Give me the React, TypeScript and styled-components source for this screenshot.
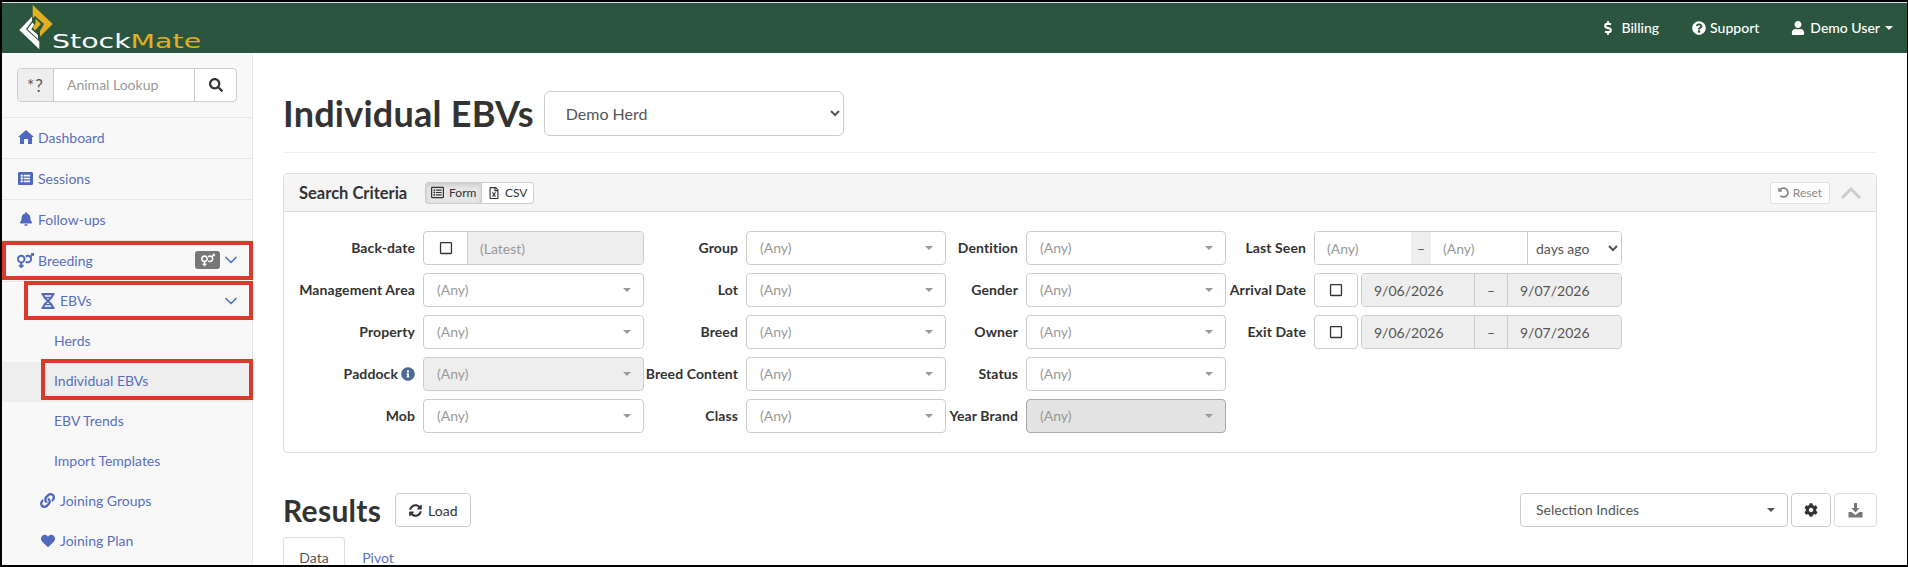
import styled, { createGlobalStyle } from "styled-components";
import {
  FaBell,
  FaCog,
  FaDollarSign,
  FaHeart,
  FaInfoCircle,
  FaLink,
  FaListAlt,
  FaQuestionCircle,
  FaRegFileExcel,
  FaRegListAlt,
  FaRegSquare,
  FaSearch,
  FaSyncAlt,
  FaUndoAlt,
  FaUser,
  FaVenusMars,
} from "react-icons/fa";
import { FiChevronDown } from "react-icons/fi";

const GlobalStyle = createGlobalStyle`
  html, body {
    margin: 0;
    height: 100%;
    overflow: hidden;
    background: #000;
  }
  body, select, input, button {
    font-family: Lato, "Liberation Sans", sans-serif;
    font-size: 14px;
  }
  * {
    box-sizing: border-box;
  }
`;

const Frame = styled.div`
  height: 567px;
  padding: 2px 1px 2px 2px;
  background: #000;
`;
const Page = styled.div`
  height: 563px;
  overflow: hidden;
  background: #fff;
  border-top: 1px solid #ddd;
  display: flex;
  flex-direction: column;
`;

const TopBar = styled.header`
  flex: 0 0 50px;
  background: #2c5540;
  color: #fff;
  display: flex;
  align-items: center;
  justify-content: space-between;
  padding: 0 14px 0 17px;
`;
const Logo = styled.div`
  display: flex;
  align-items: flex-end;
  height: 50px;
`;
const LogoText = styled.span`
  font-family: "DejaVu Sans", sans-serif;
  font-size: 20px;
  line-height: 20px;
  margin: 0 0 2px -3px;
  transform: scaleX(1.42);
  transform-origin: left bottom;
  color: #fff;
  b {
    font-weight: 400;
    color: #e0b022;
  }
`;
const TopNav = styled.nav`
  display: flex;
  align-items: center;
  font-weight: 500;
  margin-top: -1px;
`;
const TopItem = styled.span<{ $gap: number; $space: number }>`
  display: inline-flex;
  align-items: center;
  gap: ${({ $gap }) => $gap}px;
  margin-left: ${({ $space }) => $space}px;
`;
const Caret = styled.i<{ $color?: string }>`
  display: inline-block;
  width: 0;
  height: 0;
  border-left: 4px solid transparent;
  border-right: 4px solid transparent;
  border-top: 4px solid ${({ $color }) => $color ?? "currentColor"};
`;

const Body = styled.div`
  flex: 1;
  display: flex;
  min-height: 0;
`;
const Sidebar = styled.aside`
  flex: 0 0 251px;
  background: #f8f8f8;
  border-right: 1px solid #e7e7e7;
`;
const SearchWrap = styled.div`
  height: 65px;
  padding: 15px 15px 0 15px;
  border-bottom: 1px solid #e7e7e7;
`;
const SearchGroup = styled.div`
  display: flex;
  width: 220px;
  height: 34px;
  border: 1px solid #ccc;
  border-radius: 4px;
  background: #fff;
  overflow: hidden;
`;
const SearchAddon = styled.span`
  width: 36px;
  background: #eee;
  border-right: 1px solid #ccc;
  color: #555;
  display: flex;
  align-items: center;
  justify-content: center;
  font-size: 17px;
  letter-spacing: 1px;
`;
const SearchInput = styled.span`
  width: 140px;
  padding: 0 0 1px 13px;
  color: #999;
  display: flex;
  align-items: center;
`;
const SearchButton = styled.span`
  flex: 1;
  border-left: 1px solid #ccc;
  color: #333;
  display: flex;
  align-items: center;
  justify-content: center;
`;

const NavRow = styled.div<{ $indent: number; $divider?: boolean; $active?: boolean }>`
  position: relative;
  height: ${({ $divider }) => ($divider ? 41 : 40)}px;
  display: flex;
  align-items: center;
  gap: 4px;
  padding: 0 11px ${({ $divider }) => ($divider ? 2 : 3)}px ${({ $indent }) => $indent}px;
  color: #5a6fbd;
  background: ${({ $active }) => ($active ? "#eee" : "transparent")};
  border-bottom: ${({ $divider }) => ($divider ? "1px solid #e7e7e7" : "none")};
`;
const NavIcon = styled.span`
  width: 17px;
  display: inline-flex;
  justify-content: center;
  color: #5069bd;
`;
const Push = styled.span`
  margin-left: auto;
  display: inline-flex;
  align-items: center;
  gap: 1px;
`;
const Badge = styled.span`
  width: 25px;
  height: 18px;
  border-radius: 3px;
  background: #777;
  color: #fff;
  display: inline-flex;
  align-items: center;
  justify-content: center;
`;
const Annotation = styled.span<{ $top: number; $left: number; $bottom: number }>`
  position: absolute;
  top: ${({ $top }) => $top}px;
  left: ${({ $left }) => $left}px;
  right: -1px;
  bottom: ${({ $bottom }) => $bottom}px;
  border: 4px solid #d93a2b;
  z-index: 2;
  pointer-events: none;
`;

const Main = styled.main`
  flex: 1;
  padding: 0 30px;
  color: #333;
  min-width: 0;
`;
const TitleRow = styled.div`
  display: flex;
  align-items: center;
  gap: 10px;
  padding: 38px 0 16px;
  border-bottom: 1px solid #eee;
  margin-bottom: 20px;
`;
const Title = styled.h1`
  margin: 0;
  font-size: 36px;
  line-height: 45px;
  letter-spacing: 0.24px;
  font-weight: 700;
  color: #333;
`;
const HerdSelect = styled.select`
  width: 300px;
  height: 45px;
  padding: 0 17px;
  font-size: 16px;
  color: #555;
  background: #fff;
  border: 1px solid #ccc;
  border-radius: 6px;
`;

const Card = styled.section`
  border: 1px solid #ddd;
  border-radius: 4px;
`;
const CardHeader = styled.div`
  height: 38px;
  background: #f5f5f5;
  border-bottom: 1px solid #ddd;
  display: flex;
  align-items: center;
  padding: 0 15px 0 15px;
`;
const CardTitle = styled.span`
  font-size: 16.5px;
  font-weight: 700;
  color: #333;
`;
const ToggleGroup = styled.div`
  display: flex;
  margin-left: 18px;
`;
const ToggleButton = styled.span<{ $on?: boolean }>`
  width: ${({ $on }) => ($on ? 57 : 53)}px;
  height: 22px;
  display: inline-flex;
  align-items: center;
  justify-content: center;
  gap: 5px;
  font-size: 12px;
  color: #333;
  border: 1px solid #ccc;
  background: ${({ $on }) => ($on ? "#e6e6e6" : "#fff")};
  box-shadow: ${({ $on }) => ($on ? "inset 0 2px 4px rgba(0,0,0,.125)" : "none")};
  border-radius: ${({ $on }) => ($on ? "3px 0 0 3px" : "0 3px 3px 0")};
  margin-left: ${({ $on }) => ($on ? 0 : -1)}px;
`;
const ResetButton = styled.span`
  margin-left: auto;
  width: 60px;
  height: 22px;
  display: inline-flex;
  align-items: center;
  justify-content: center;
  gap: 4px;
  font-size: 12px;
  color: #777;
  background: #fff;
  border: 1px solid #ddd;
  border-radius: 3px;
  opacity: 0.85;
`;
const Collapse = styled.span`
  margin-left: 11px;
  display: inline-flex;
`;

const FormGrid = styled.div`
  display: flex;
  padding: 19px 0 19px 15px;
`;
const FormColumn = styled.div<{ $label: number; $control: number }>`
  display: grid;
  grid-template-columns: ${({ $label, $control }) => `${$label}px ${$control}px`};
  grid-auto-rows: 34px;
  row-gap: 8px;
  align-content: start;
`;
const Label = styled.label`
  align-self: center;
  justify-self: end;
  padding: 0 8px 1px 0;
  font-weight: 700;
  letter-spacing: 0.1px;
  white-space: nowrap;
  display: inline-flex;
  align-items: center;
  gap: 3px;
  color: #333;
`;
const SelectBox = styled.div<{ $tone?: "plain" | "muted" | "dark" }>`
  height: 34px;
  display: flex;
  align-items: center;
  justify-content: space-between;
  padding: 0 12px 1px 13px;
  color: #999;
  border-radius: 4px;
  border: 1px solid ${({ $tone }) => ($tone === "dark" ? "#aaa" : "#ccc")};
  background: ${({ $tone }) =>
    $tone === "dark" ? "#e3e3e3" : $tone === "muted" ? "#eee" : "#fff"};
`;
const InputGroup = styled.div<{ $grow?: boolean }>`
  height: 34px;
  flex: ${({ $grow }) => ($grow ? 1 : "none")};
  display: flex;
  border: 1px solid #ccc;
  border-radius: 4px;
  overflow: hidden;
  background: #fff;
`;
const CheckCell = styled.span<{ $width: number }>`
  flex: 0 0 ${({ $width }) => $width}px;
  display: flex;
  align-items: center;
  justify-content: center;
  color: #333;
`;
const TextCell = styled.span<{ $width?: number; $grey?: boolean; $dim?: boolean; $edge?: boolean }>`
  flex: ${({ $width }) => ($width ? `0 0 ${$width}px` : "1")};
  display: flex;
  align-items: center;
  padding: 0 12px;
  color: ${({ $dim }) => ($dim ? "#999" : "#555")};
  background: ${({ $grey }) => ($grey ? "#eee" : "#fff")};
  border-left: ${({ $edge }) => ($edge ? "1px solid #ccc" : "none")};
`;
const DashCell = styled.span<{ $width: number; $edge?: boolean }>`
  flex: 0 0 ${({ $width }) => $width}px;
  display: flex;
  align-items: center;
  justify-content: center;
  background: #eee;
  color: #555;
  border-left: ${({ $edge }) => ($edge ? "1px solid #ccc" : "none")};
  border-right: ${({ $edge }) => ($edge ? "1px solid #ccc" : "none")};
`;
const UnitSelect = styled.select`
  flex: 1;
  min-width: 0;
  border: none;
  border-left: 1px solid #ccc;
  background: #fff;
  color: #555;
  padding-left: 4px;
`;
const DateRow = styled.div`
  display: flex;
  gap: 3px;
`;

const ResultsRow = styled.div`
  display: flex;
  align-items: flex-start;
  gap: 14px;
  margin-top: 40px;
`;
const ResultsTitle = styled.h2`
  margin: 0;
  font-size: 30px;
  line-height: 34px;
  letter-spacing: 0.3px;
  font-weight: 700;
  color: #333;
`;
const Button = styled.span<{ $width: number; $faded?: boolean }>`
  width: ${({ $width }) => $width}px;
  height: 34px;
  display: inline-flex;
  align-items: center;
  justify-content: center;
  gap: 6px;
  background: #fff;
  color: ${({ $faded }) => ($faded ? "#777" : "#333")};
  border: 1px solid ${({ $faded }) => ($faded ? "#ddd" : "#ccc")};
  border-radius: 4px;
`;
const ResultTools = styled.div`
  margin-left: auto;
  display: flex;
  gap: 3px;
`;
const IndexSelect = styled.div`
  width: 268px;
  height: 34px;
  display: flex;
  align-items: center;
  justify-content: space-between;
  padding: 0 12px 1px 15px;
  color: #555;
  border: 1px solid #ccc;
  border-radius: 4px;
`;
const Tabs = styled.div`
  display: flex;
  margin-top: 10px;
`;
const Tab = styled.span<{ $active?: boolean }>`
  width: 62px;
  height: 42px;
  padding-top: 11px;
  margin-left: ${({ $active }) => ($active ? 0 : 2)}px;
  text-align: center;
  color: ${({ $active }) => ($active ? "#555" : "#5a6fbd")};
  border: 1px solid ${({ $active }) => ($active ? "#ddd" : "transparent")};
  border-bottom: none;
  border-radius: 4px 4px 0 0;
`;

function LogoMark() {
  return (
    <svg width="36" height="46" viewBox="0 0 36 46" style={{ marginBottom: 2 }}>
      <path fill="#e0b022" d="M13.7 0 L33.7 19 L21 31.7 V26 L25 19 L16 11 L13.7 13.3 Z" />
      <path fill="#e0b022" d="M16.5 13.7 L22 19 L16 25.5 L13.7 22.3 L16.5 19 Z" />
      <path fill="#fff" d="M0.3 25 L13 11.7 V16 L7 24.3 L20.3 36.5 V44.3 Z" />
      <path fill="#fff" d="M8.5 24.3 L13.3 17.7 L15.3 19.3 L12.3 24.3 L19 30 V34 Z" />
    </svg>
  );
}

function HomeIcon() {
  return (
    <svg width="16" height="14" viewBox="0 0 16 14" fill="#5069bd">
      <path d="M8 0 L16 7 H14 V14 H10 V9 H6 V14 H2 V7 H0 Z" />
    </svg>
  );
}

function DnaGlass() {
  return (
    <svg width="14" height="16" viewBox="0 0 14 16" fill="none" stroke="#5069bd">
      <path strokeWidth="2.2" d="M0.5 1.1 H13.5 M0.5 14.9 H13.5" />
      <path strokeWidth="2" d="M2.5 2 C2.5 6.5 11.5 9.5 11.5 14 M11.5 2 C11.5 6.5 2.5 9.5 2.5 14" />
      <path strokeWidth="1.3" d="M3.5 4.5 H10.5 M3.5 11.5 H10.5" />
    </svg>
  );
}

function DownloadIcon() {
  return (
    <svg width="15" height="15" viewBox="0 0 15 15" fill="#777">
      <path d="M6 0 H9 V5 H11.5 L7.5 9.5 L3.5 5 H6 Z" />
      <path d="M0.5 9 H3.5 L7.5 12 L11.5 9 H14.5 V14.5 H0.5 Z" />
    </svg>
  );
}

function CollapseChevron() {
  return (
    <svg width="20" height="12" viewBox="0 0 20 12" fill="none" stroke="#ccc" strokeWidth="3">
      <path d="M1 11 L10 2 L19 11" />
    </svg>
  );
}

function AnySelect({ tone }: { tone?: "plain" | "muted" | "dark" }) {
  return (
    <SelectBox $tone={tone}>
      (Any)
      <Caret $color="#999" />
    </SelectBox>
  );
}

function Field({ label, tone }: { label: string; tone?: "plain" | "muted" | "dark" }) {
  return (
    <>
      <Label>{label}</Label>
      <AnySelect tone={tone} />
    </>
  );
}

function DateField({ label }: { label: string }) {
  return (
    <>
      <Label>{label}</Label>
      <DateRow>
        <InputGroup>
          <CheckCell $width={42}>
            <FaRegSquare size={14} />
          </CheckCell>
        </InputGroup>
        <InputGroup $grow>
          <TextCell $grey $width={112}>
            9/06/2026
          </TextCell>
          <DashCell $width={34} $edge>
            –
          </DashCell>
          <TextCell $grey>9/07/2026</TextCell>
        </InputGroup>
      </DateRow>
    </>
  );
}

export default function App() {
  return (
    <Frame>
      <GlobalStyle />
      <Page>
        <TopBar>
          <Logo>
            <LogoMark />
            <LogoText>
              Stock<b>Mate</b>
            </LogoText>
          </Logo>
          <TopNav>
            <TopItem $gap={7} $space={0}>
              <FaDollarSign size={14} /> Billing
            </TopItem>
            <TopItem $gap={4} $space={33}>
              <FaQuestionCircle size={14} /> Support
            </TopItem>
            <TopItem $gap={5} $space={32}>
              <FaUser size={14} /> Demo User <Caret />
            </TopItem>
          </TopNav>
        </TopBar>
        <Body>
          <Sidebar>
            <SearchWrap>
              <SearchGroup>
                <SearchAddon>*?</SearchAddon>
                <SearchInput>Animal Lookup</SearchInput>
                <SearchButton>
                  <FaSearch size={14} />
                </SearchButton>
              </SearchGroup>
            </SearchWrap>
            <NavRow $indent={15} $divider>
              <NavIcon>
                <HomeIcon />
              </NavIcon>
              Dashboard
            </NavRow>
            <NavRow $indent={15} $divider>
              <NavIcon>
                <FaListAlt size={15} />
              </NavIcon>
              Sessions
            </NavRow>
            <NavRow $indent={15} $divider>
              <NavIcon>
                <FaBell size={14} />
              </NavIcon>
              Follow-ups
            </NavRow>
            <NavRow $indent={15} $divider>
              <NavIcon>
                <FaVenusMars size={17} />
              </NavIcon>
              Breeding
              <Push>
                <Badge>
                  <FaVenusMars size={14} />
                </Badge>
                <FiChevronDown size={20} />
              </Push>
              <Annotation $top={0} $left={0} $bottom={1} />
            </NavRow>
            <NavRow $indent={37}>
              <NavIcon>
                <DnaGlass />
              </NavIcon>
              EBVs
              <Push>
                <FiChevronDown size={20} />
              </Push>
              <Annotation $top={-1} $left={22} $bottom={2} />
            </NavRow>
            <NavRow $indent={52}>Herds</NavRow>
            <NavRow $indent={52} $active>
              Individual EBVs
              <Annotation $top={-3} $left={39} $bottom={2} />
            </NavRow>
            <NavRow $indent={52}>EBV Trends</NavRow>
            <NavRow $indent={52}>Import Templates</NavRow>
            <NavRow $indent={37}>
              <NavIcon>
                <FaLink size={15} />
              </NavIcon>
              Joining Groups
            </NavRow>
            <NavRow $indent={37}>
              <NavIcon>
                <FaHeart size={14} />
              </NavIcon>
              Joining Plan
            </NavRow>
          </Sidebar>
          <Main>
            <TitleRow>
              <Title>Individual EBVs</Title>
              <HerdSelect defaultValue="Demo Herd">
                <option>Demo Herd</option>
              </HerdSelect>
            </TitleRow>
            <Card>
              <CardHeader>
                <CardTitle>Search Criteria</CardTitle>
                <ToggleGroup>
                  <ToggleButton $on>
                    <FaRegListAlt size={13} /> Form
                  </ToggleButton>
                  <ToggleButton>
                    <FaRegFileExcel size={12} /> CSV
                  </ToggleButton>
                </ToggleGroup>
                <ResetButton>
                  <FaUndoAlt size={11} /> Reset
                </ResetButton>
                <Collapse>
                  <CollapseChevron />
                </Collapse>
              </CardHeader>
              <FormGrid>
                <FormColumn $label={124} $control={221}>
                  <Label>Back-date</Label>
                  <InputGroup>
                    <CheckCell $width={43}>
                      <FaRegSquare size={14} />
                    </CheckCell>
                    <TextCell $grey $dim $edge>
                      (Latest)
                    </TextCell>
                  </InputGroup>
                  <Field label="Management Area" />
                  <Field label="Property" />
                  <Label>
                    Paddock <FaInfoCircle size={14} color="#4a6a94" />
                  </Label>
                  <AnySelect tone="muted" />
                  <Field label="Mob" />
                </FormColumn>
                <FormColumn $label={102} $control={200}>
                  <Field label="Group" />
                  <Field label="Lot" />
                  <Field label="Breed" />
                  <Field label="Breed Content" />
                  <Field label="Class" />
                </FormColumn>
                <FormColumn $label={80} $control={200}>
                  <Field label="Dentition" />
                  <Field label="Gender" />
                  <Field label="Owner" />
                  <Field label="Status" />
                  <Field label="Year Brand" tone="dark" />
                </FormColumn>
                <FormColumn $label={88} $control={308}>
                  <Label>Last Seen</Label>
                  <InputGroup>
                    <TextCell $width={96} $dim>
                      (Any)
                    </TextCell>
                    <DashCell $width={20}>–</DashCell>
                    <TextCell $width={96} $dim>
                      (Any)
                    </TextCell>
                    <UnitSelect defaultValue="days ago">
                      <option>days ago</option>
                    </UnitSelect>
                  </InputGroup>
                  <DateField label="Arrival Date" />
                  <DateField label="Exit Date" />
                </FormColumn>
              </FormGrid>
            </Card>
            <ResultsRow>
              <ResultsTitle>Results</ResultsTitle>
              <Button $width={76}>
                <FaSyncAlt size={13} /> Load
              </Button>
              <ResultTools>
                <IndexSelect>
                  Selection Indices
                  <Caret $color="#555" />
                </IndexSelect>
                <Button $width={40}>
                  <FaCog size={14} />
                </Button>
                <Button $width={43} $faded>
                  <DownloadIcon />
                </Button>
              </ResultTools>
            </ResultsRow>
            <Tabs>
              <Tab $active>Data</Tab>
              <Tab>Pivot</Tab>
            </Tabs>
          </Main>
        </Body>
      </Page>
    </Frame>
  );
}
